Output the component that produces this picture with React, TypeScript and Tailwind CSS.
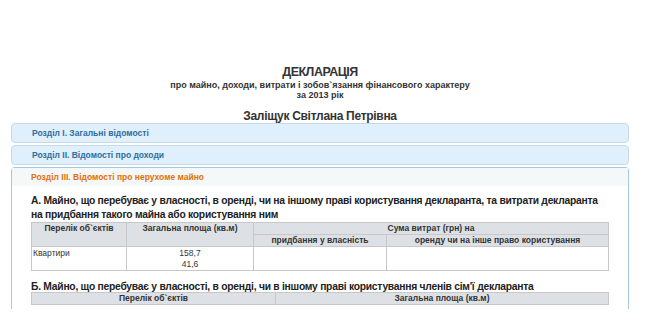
export default function App() {
  const font = "font-['Liberation_Sans',Arial,sans-serif]";

  return (
    <div className={`w-[648px] h-[327px] overflow-hidden bg-white text-[#333] ${font}`}>
      <div className="w-[640px] pt-[65px]">
        {/* Title */}
        <div className="text-center">
          <h1 className="text-[12.5px] leading-[15px] font-bold tracking-[-0.5px] text-[#333]">ДЕКЛАРАЦІЯ</h1>
          <p className="text-[9px] leading-[10px] font-bold text-[#333]">
            про майно, доходи, витрати і зобов`язання фінансового характеру
          </p>
          <p className="text-[9px] leading-[10px] font-bold text-[#333]">за 2013 рік</p>
          <h2 className="mt-[10px] text-[12px] leading-[13px] font-bold tracking-[-0.3px] text-[#333]">Заліщук Світлана Петрівна</h2>
        </div>

        {/* Accordion */}
        <div className="mx-[11px] flex flex-col gap-[2px]">
          <div className="h-[20px] flex items-center pl-[20px] rounded-[4px] border border-[#c5dbec] bg-[#dfeffc] text-[8.5px] font-bold text-[#2e6e9e]">
            Розділ I. Загальні відомості
          </div>
          <div className="h-[20px] flex items-center pl-[20px] rounded-[4px] border border-[#c5dbec] bg-[#dfeffc] text-[8.5px] font-bold text-[#2e6e9e]">
            Розділ II. Відомості про доходи
          </div>
          <div className="h-[142px] flex flex-col rounded-t-[4px] border-x border-t border-[#a6c9e2]">
            <div className="h-[18px] shrink-0 flex items-center pl-[19px] bg-[#f5f8f9] text-[8.5px] font-bold text-[#e17009]">
              Розділ III. Відомості про нерухоме майно
            </div>
            <div className="flex-1 bg-white pl-[19px] pr-[15px] pt-[8px]">
              <h3 className="max-w-[574px] text-[10.3px] leading-[14px] font-bold tracking-[-0.25px] text-[#222]">
                А. Майно, що перебуває у власності, в оренді, чи на іншому праві користування декларанта, та витрати декларанта на придбання такого майна або користування ним
              </h3>
              <table className="w-[578px] border-collapse text-[8.5px] text-[#333]">
                <thead>
                  <tr className="h-[12px]">
                    <th rowSpan={2} className="w-[95px] border border-[#c8c8c8] bg-[#dde1e5] font-bold align-top leading-[11px]">Перелік об`єктів</th>
                    <th rowSpan={2} className="w-[127px] border border-[#c8c8c8] bg-[#dde1e5] font-bold align-top leading-[11px]">Загальна площа (кв.м)</th>
                    <th colSpan={2} className="border border-[#c8c8c8] bg-[#dde1e5] font-bold leading-[11px]">Сума витрат (грн) на</th>
                  </tr>
                  <tr className="h-[12px]">
                    <th className="w-[133px] border border-[#c8c8c8] bg-[#dde1e5] font-bold leading-[11px]">придбання у власність</th>
                    <th className="border border-[#c8c8c8] bg-[#dde1e5] font-bold leading-[11px]">оренду чи на інше право користування</th>
                  </tr>
                </thead>
                <tbody>
                  <tr className="h-[23px]">
                    <td className="border border-[#c8c8c8] align-top leading-[11px] pl-[1px] pt-[1px] text-[#333]">Квартири</td>
                    <td className="border border-[#c8c8c8] align-top text-center leading-[11px] pt-[1px]">
                      158,7
                      <br />
                      41,6
                    </td>
                    <td className="border border-[#c8c8c8]"></td>
                    <td className="border border-[#c8c8c8]"></td>
                  </tr>
                </tbody>
              </table>
              <h3 className="mt-[10px] text-[10.3px] leading-[11px] font-bold tracking-[-0.25px] text-[#222]">
                Б. Майно, що перебуває у власності, в оренді, чи в іншому праві користування членів сім'ї декларанта
              </h3>
              <table className="w-[578px] border-collapse text-[8.5px] text-[#333]">
                <thead>
                  <tr className="h-[12px]">
                    <th className="w-[244px] border border-[#c8c8c8] bg-[#dde1e5] font-bold leading-[11px]">Перелік об`єктів</th>
                    <th className="border border-[#c8c8c8] bg-[#dde1e5] font-bold leading-[11px]">Загальна площа (кв.м)</th>
                  </tr>
                </thead>
              </table>
            </div>
          </div>
        </div>
      </div>
    </div>
  );
}
